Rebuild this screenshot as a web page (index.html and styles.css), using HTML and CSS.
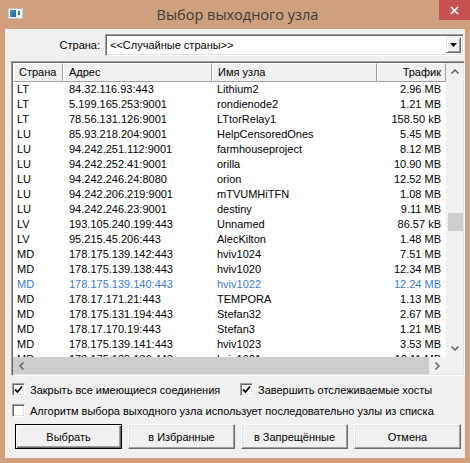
FILE: index.html
```html
<!DOCTYPE html>
<html>
<head>
  <meta charset="utf-8">
  <title>Выбор выходного узла</title>
  <link rel="stylesheet" href="styles.css">
</head>
<body>
  <div class="window">
    <!-- Title bar -->
    <div class="titlebar">
      <svg class="app-icon" width="15" height="11" viewBox="0 0 15 11">
        <defs>
          <linearGradient id="ig" x1="0" y1="0" x2="1" y2="1">
            <stop offset="0" stop-color="#4aa0a8"/>
            <stop offset="1" stop-color="#2a5f9e"/>
          </linearGradient>
        </defs>
        <rect x="0.5" y="0.5" width="14" height="10" fill="#f4f4f4" stroke="#c8c8c8"/>
        <rect x="2" y="2" width="6" height="7" fill="url(#ig)"/>
        <rect x="10" y="3" width="2" height="4" fill="#2f7d8a"/>
      </svg>
      <div class="title">Выбор выходного узла</div>
      <div class="close-btn">
        <svg width="9" height="9" viewBox="0 0 9 9">
          <path d="M1 1 L8 8 M8 1 L1 8" stroke="#fff" stroke-width="1.6"/>
        </svg>
      </div>
    </div>

    <div class="client">
      <!-- Country selector -->
      <div class="country-row">
        <label class="country-label">Страна:</label>
        <div class="combo">
          <span class="combo-text">&lt;&lt;Случайные страны&gt;&gt;</span>
          <div class="combo-btn">
            <svg width="7" height="4" viewBox="0 0 7 4"><path d="M0 0 H7 L3.5 4 Z" fill="#000"/></svg>
          </div>
        </div>
      </div>

      <!-- Node list -->
      <div class="listview">
        <div class="list-main">
          <div class="list-header">
            <div class="hcell">Страна</div>
            <div class="hcell">Адрес</div>
            <div class="hcell">Имя узла</div>
            <div class="hcell right">Трафик</div>
          </div>
          <div class="list-body">
            <div class="row"><span>LT</span><span>84.32.116.93:443</span><span>Lithium2</span><span class="right">2.96 MB</span></div>
            <div class="row"><span>LT</span><span>5.199.165.253:9001</span><span>rondienode2</span><span class="right">1.21 MB</span></div>
            <div class="row"><span>LT</span><span>78.56.131.126:9001</span><span>LTtorRelay1</span><span class="right">158.50 kB</span></div>
            <div class="row"><span>LU</span><span>85.93.218.204:9001</span><span>HelpCensoredOnes</span><span class="right">5.45 MB</span></div>
            <div class="row"><span>LU</span><span>94.242.251.112:9001</span><span>farmhouseproject</span><span class="right">8.12 MB</span></div>
            <div class="row"><span>LU</span><span>94.242.252.41:9001</span><span>orilla</span><span class="right">10.90 MB</span></div>
            <div class="row"><span>LU</span><span>94.242.246.24:8080</span><span>orion</span><span class="right">12.52 MB</span></div>
            <div class="row"><span>LU</span><span>94.242.206.219:9001</span><span>mTVUMHiTFN</span><span class="right">1.08 MB</span></div>
            <div class="row"><span>LU</span><span>94.242.246.23:9001</span><span>destiny</span><span class="right">9.11 MB</span></div>
            <div class="row"><span>LV</span><span>193.105.240.199:443</span><span>Unnamed</span><span class="right">86.57 kB</span></div>
            <div class="row"><span>LV</span><span>95.215.45.206:443</span><span>AlecKilton</span><span class="right">1.48 MB</span></div>
            <div class="row"><span>MD</span><span>178.175.139.142:443</span><span>hviv1024</span><span class="right">7.51 MB</span></div>
            <div class="row"><span>MD</span><span>178.175.139.138:443</span><span>hviv1020</span><span class="right">12.34 MB</span></div>
            <div class="row selected"><span>MD</span><span>178.175.139.140:443</span><span>hviv1022</span><span class="right">12.24 MB</span></div>
            <div class="row"><span>MD</span><span>178.17.171.21:443</span><span>TEMPORA</span><span class="right">1.13 MB</span></div>
            <div class="row"><span>MD</span><span>178.175.131.194:443</span><span>Stefan32</span><span class="right">2.67 MB</span></div>
            <div class="row"><span>MD</span><span>178.17.170.19:443</span><span>Stefan3</span><span class="right">1.21 MB</span></div>
            <div class="row"><span>MD</span><span>178.175.139.141:443</span><span>hviv1023</span><span class="right">3.53 MB</span></div>
            <div class="row"><span>MD</span><span>178.175.139.136:443</span><span>hviv1021</span><span class="right">10.11 MB</span></div>
          </div>
        </div>

        <div class="vscroll">
          <div class="sb-btn">
            <svg width="8" height="5" viewBox="0 0 8 5"><path d="M0.5 4.5 L4 1 L7.5 4.5" fill="none" stroke="#606060" stroke-width="1.5"/></svg>
          </div>
          <div class="v-track"><div class="v-thumb"></div></div>
          <div class="sb-btn">
            <svg width="8" height="5" viewBox="0 0 8 5"><path d="M0.5 0.5 L4 4 L7.5 0.5" fill="none" stroke="#606060" stroke-width="1.5"/></svg>
          </div>
        </div>

        <div class="hscroll">
          <div class="sb-btn">
            <svg width="5" height="8" viewBox="0 0 5 8"><path d="M4.5 0.5 L1 4 L4.5 7.5" fill="none" stroke="#606060" stroke-width="1.5"/></svg>
          </div>
          <div class="h-thumb"></div>
          <div class="sb-btn">
            <svg width="5" height="8" viewBox="0 0 5 8"><path d="M0.5 0.5 L4 4 L0.5 7.5" fill="none" stroke="#606060" stroke-width="1.5"/></svg>
          </div>
        </div>
        <div class="sb-corner"></div>
      </div>

      <!-- Options -->
      <div class="options-row">
        <div class="check-item">
          <span class="checkbox">
            <svg width="9" height="9" viewBox="0 0 9 9"><path d="M1 4.5 L3.5 7 L8 1.5" fill="none" stroke="#000" stroke-width="1.8"/></svg>
          </span>
          <span>Закрыть все имеющиеся соединения</span>
        </div>
        <div class="check-item">
          <span class="checkbox">
            <svg width="9" height="9" viewBox="0 0 9 9"><path d="M1 4.5 L3.5 7 L8 1.5" fill="none" stroke="#000" stroke-width="1.8"/></svg>
          </span>
          <span>Завершить отслеживаемые хосты</span>
        </div>
      </div>
      <div class="options-row single">
        <div class="check-item">
          <span class="checkbox"></span>
          <span>Алгоритм выбора выходного узла использует последовательно узлы из списка</span>
        </div>
      </div>

      <!-- Buttons -->
      <div class="button-row">
        <button class="btn default">Выбрать</button>
        <button class="btn">в Избранные</button>
        <button class="btn">в Запрещённые</button>
        <button class="btn">Отмена</button>
      </div>
    </div>
  </div>
</body>
</html>
```

FILE: styles.css
```css
body {
  margin: 0;
  background: #cfa07e;
  font-family: "Liberation Sans", Arial, sans-serif;
  font-size: 11px;
  color: #000;
  overflow: hidden;
}

.window {
  width: 470px;
  height: 463px;
}

/* Title bar */
.titlebar {
  height: 29px;
  display: grid;
  grid-template-columns: 31px 1fr 31px;
}

.app-icon {
  margin: 8px 0 0 8px;
}

.title {
  text-align: center;
  font-family: "Open Sans", sans-serif;
  font-size: 14.5px;
  line-height: 29px;
  color: #3a3a3a;
  padding-left: 5px;
}

.close-btn {
  height: 20px;
  background: #c75050;
  display: flex;
  align-items: center;
  justify-content: center;
}

/* Client area */
.client {
  margin: 0 5px 5px 5px;
  height: 429px;
  background: #f0f0f0;
  display: flex;
  flex-direction: column;
}

.country-row {
  display: grid;
  grid-template-columns: 100px 1fr;
  margin: 5px 1px 0 0;
  height: 20px;
}

.country-label {
  text-align: right;
  padding-right: 5px;
  line-height: 22px;
}

.combo {
  display: flex;
  align-items: center;
  background: #fff;
  border-top: 1px solid #a0a0a0;
  border-left: 1px solid #a0a0a0;
  border-right: 1px solid #fff;
  border-bottom: 1px solid #fff;
  box-shadow: inset 1px 1px 0 #696969, inset -1px -1px 0 #e3e3e3;
  padding: 1px 2px 1px 4px;
}

.combo-text {
  flex: 1;
}

.combo-btn {
  width: 15px;
  height: 16px;
  box-sizing: border-box;
  background: #f0f0f0;
  border-top: 1px solid #e3e3e3;
  border-left: 1px solid #e3e3e3;
  border-right: 1px solid #696969;
  border-bottom: 1px solid #696969;
  box-shadow: inset 1px 1px 0 #fff, inset -1px -1px 0 #a0a0a0;
  display: flex;
  align-items: center;
  justify-content: center;
}

/* List view */
.listview {
  margin: 7px 0 0 6px;
  height: 315px;
  box-sizing: border-box;
  border-top: 1px solid #a0a0a0;
  border-left: 1px solid #a0a0a0;
  border-right: 1px solid #fff;
  border-bottom: 1px solid #fff;
  box-shadow: inset 1px 1px 0 #696969, inset -1px -1px 0 #e3e3e3;
  padding: 1px;
  display: grid;
  grid-template-columns: 1fr 17px;
  grid-template-rows: 1fr 17px;
}

.list-main {
  background: #fff;
  overflow: hidden;
}

.list-header {
  display: grid;
  grid-template-columns: 50px 149px 165px 69px;
  height: 19px;
  background: #f0f0f0;
}

.hcell {
  border-top: 1px solid #fff;
  border-left: 1px solid #fff;
  border-right: 1px solid #a0a0a0;
  border-bottom: 1px solid #a0a0a0;
  padding: 0 4px 0 5px;
  line-height: 17px;
}

.list-body .row {
  display: grid;
  grid-template-columns: 50px 149px 165px 69px;
  height: 15px;
  line-height: 15px;
  white-space: nowrap;
}

.row span {
  overflow: hidden;
  padding-left: 6px;
}

.row span:first-child {
  padding-left: 4px;
}

.row span:nth-child(3) {
  padding-left: 5px;
}

.right {
  text-align: right;
}

.row span.right {
  padding-left: 0;
  padding-right: 5px;
}

.row.selected {
  color: #3b7ad8;
}

/* Scroll bars */
.vscroll {
  background: #f0f0f0;
  display: flex;
  flex-direction: column;
}

.sb-btn {
  width: 17px;
  height: 17px;
  display: flex;
  align-items: center;
  justify-content: center;
  flex: none;
}

.v-track {
  flex: 1;
  padding-top: 133px;
}

.v-thumb {
  height: 18px;
  margin: 0 0 0 2px;
  background: #cdcdcd;
}

.hscroll {
  background: #cdcdcd;
  display: flex;
}

.hscroll .sb-btn:last-child {
  background: #f0f0f0;
}

.h-thumb {
  flex: 1;
  background: #cdcdcd;
}

.sb-corner {
  background: #f0f0f0;
}

/* Options */
.options-row {
  display: grid;
  grid-template-columns: 228px 1fr;
  margin: 6px 0 0 7px;
  height: 15px;
}

.options-row.single {
  grid-template-columns: 1fr;
}

.check-item {
  display: flex;
  align-items: center;
  gap: 5px;
  white-space: nowrap;
}

.checkbox {
  width: 13px;
  height: 13px;
  box-sizing: border-box;
  background: #fff;
  border-top: 1px solid #a0a0a0;
  border-left: 1px solid #a0a0a0;
  border-right: 1px solid #fff;
  border-bottom: 1px solid #fff;
  box-shadow: inset 1px 1px 0 #696969, inset -1px -1px 0 #e3e3e3;
  display: flex;
  align-items: center;
  justify-content: center;
  flex: none;
}

/* Buttons */
.button-row {
  display: grid;
  grid-template-columns: repeat(4, 1fr);
  gap: 6px;
  margin: 6px 4px 0 10px;
}

.btn {
  height: 25px;
  font-family: "Liberation Sans", Arial, sans-serif;
  font-size: 11px;
  color: #000;
  background: #f0f0f0;
  border-top: 1px solid #fff;
  border-left: 1px solid #fff;
  border-right: 1px solid #696969;
  border-bottom: 1px solid #696969;
  box-shadow: inset -1px -1px 0 #a0a0a0, inset 1px 1px 0 #e3e3e3;
  padding: 0;
}

.btn.default {
  border: 1px solid #000;
  box-shadow: inset 1px 1px 0 #fff, inset -1px -1px 0 #696969, inset -2px -2px 0 #a0a0a0;
}
```
